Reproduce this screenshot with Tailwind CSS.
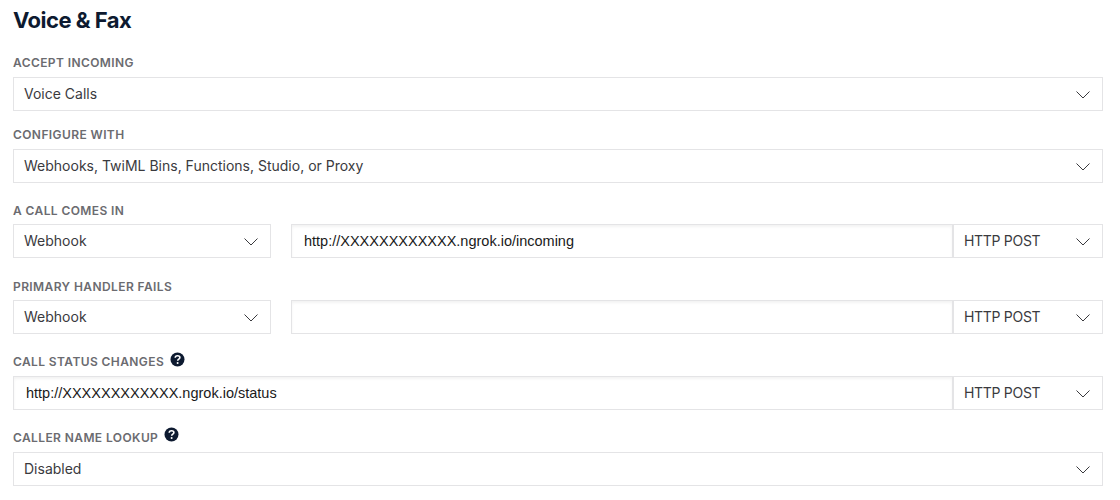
<!DOCTYPE html>
<html lang="en">
<head>
  <meta charset="UTF-8">
  <title>Voice &amp; Fax</title>
  <script src="https://cdn.jsdelivr.net/npm/@tailwindcss/browser@4"></script>
</head>
<body class="bg-white w-[1120px] h-[500px] overflow-hidden font-['Inter',sans-serif]">
<div class="pl-[13px] w-[1103px]">
  <h2 class="pt-[8px] h-[55px] text-[22px] leading-[25px] font-bold tracking-[-0.5px] text-[#0d1a30]">Voice &amp; Fax</h2>

  <label class="block h-[22px] text-[12px] leading-[15px] font-semibold tracking-[0.4px] text-[#6b6b70]">ACCEPT INCOMING</label>
  <div class="flex items-center justify-between h-[34px] px-[10px] border border-[#e4e4e6] text-[14px] text-[#3a3a3e]">
    <span class="-mt-[2px]">Voice Calls</span>
    <svg class="w-[14px] h-[8px] mr-[2px] mt-[2px]" viewBox="0 0 14 8" fill="none" stroke="#3a3a3e" stroke-width="1"><path d="M0.5 0.5 7 7 13.5 0.5"/></svg>
  </div>

  <label class="block mt-[16px] h-[22px] text-[12px] leading-[15px] font-semibold tracking-[0.4px] text-[#6b6b70]">CONFIGURE WITH</label>
  <div class="flex items-center justify-between h-[34px] px-[10px] border border-[#e4e4e6] text-[14px] text-[#3a3a3e]">
    <span class="-mt-[2px]">Webhooks, TwiML Bins, Functions, Studio, or Proxy</span>
    <svg class="w-[14px] h-[8px] mr-[2px] mt-[2px]" viewBox="0 0 14 8" fill="none" stroke="#3a3a3e" stroke-width="1"><path d="M0.5 0.5 7 7 13.5 0.5"/></svg>
  </div>

  <label class="block mt-[20px] h-[21px] text-[12px] leading-[15px] font-semibold tracking-[0.4px] text-[#6b6b70]">A CALL COMES IN</label>
  <div class="flex h-[34px] text-[14px] text-[#3a3a3e]">
    <div class="flex items-center justify-between w-[258px] px-[10px] border border-[#e4e4e6]">
      <span class="-mt-[2px]">Webhook</span>
      <svg class="w-[14px] h-[8px] mr-[2px] mt-[2px]" viewBox="0 0 14 8" fill="none" stroke="#3a3a3e" stroke-width="1"><path d="M0.5 0.5 7 7 13.5 0.5"/></svg>
    </div>
    <div class="flex items-center flex-1 ml-[20px] pl-[12px] pt-[2px] border border-[#e4e4e6] shadow-[inset_0_2px_3px_rgba(0,0,0,0.05)] font-['Liberation_Sans',sans-serif] text-[14.5px] text-[#1a1a1a]">http://XXXXXXXXXXXX.ngrok.io/incoming</div>
    <div class="flex items-center justify-between w-[151px] px-[10px] border border-[#e4e4e6] border-l-2 -ml-px">
      <span class="-mt-[2px] tracking-[-0.3px]">HTTP POST</span>
      <svg class="w-[14px] h-[8px] mr-[2px] mt-[2px]" viewBox="0 0 14 8" fill="none" stroke="#3a3a3e" stroke-width="1"><path d="M0.5 0.5 7 7 13.5 0.5"/></svg>
    </div>
  </div>

  <label class="block mt-[20px] h-[22px] pt-px text-[12px] leading-[15px] font-semibold tracking-[0.4px] text-[#6b6b70]">PRIMARY HANDLER FAILS</label>
  <div class="flex h-[34px] text-[14px] text-[#3a3a3e]">
    <div class="flex items-center justify-between w-[258px] px-[10px] border border-[#e4e4e6]">
      <span class="-mt-[2px]">Webhook</span>
      <svg class="w-[14px] h-[8px] mr-[2px] mt-[2px]" viewBox="0 0 14 8" fill="none" stroke="#3a3a3e" stroke-width="1"><path d="M0.5 0.5 7 7 13.5 0.5"/></svg>
    </div>
    <div class="flex-1 ml-[20px] border border-[#e4e4e6] shadow-[inset_0_2px_3px_rgba(0,0,0,0.05)]"></div>
    <div class="flex items-center justify-between w-[151px] px-[10px] border border-[#e4e4e6] border-l-2 -ml-px">
      <span class="-mt-[2px] tracking-[-0.3px]">HTTP POST</span>
      <svg class="w-[14px] h-[8px] mr-[2px] mt-[2px]" viewBox="0 0 14 8" fill="none" stroke="#3a3a3e" stroke-width="1"><path d="M0.5 0.5 7 7 13.5 0.5"/></svg>
    </div>
  </div>

  <label class="flex items-start gap-[6px] mt-[20px] h-[22px] text-[12px] leading-[15px] font-semibold tracking-[0.4px] text-[#6b6b70]">CALL STATUS CHANGES
    <svg class="w-[15px] h-[15px] -mt-[2px]" viewBox="0 0 15 15"><circle cx="7.5" cy="7.5" r="7" fill="#0d1a30"/><path d="M5.2 5.8c0-1.3 1-2.1 2.4-2.1s2.3.8 2.3 1.9c0 1.6-2.2 1.6-2.2 3.1" fill="none" stroke="#fff" stroke-width="1.6"/><circle cx="7.6" cy="11" r="1" fill="#fff"/></svg>
  </label>
  <div class="flex h-[34px] text-[14px] text-[#3a3a3e]">
    <div class="flex items-center flex-1 pl-[12px] pt-[2px] border border-[#e4e4e6] shadow-[inset_0_2px_3px_rgba(0,0,0,0.05)] font-['Liberation_Sans',sans-serif] text-[14.5px] text-[#1a1a1a]">http://XXXXXXXXXXXX.ngrok.io/status</div>
    <div class="flex items-center justify-between w-[151px] px-[10px] border border-[#e4e4e6] border-l-2 -ml-px">
      <span class="-mt-[2px] tracking-[-0.3px]">HTTP POST</span>
      <svg class="w-[14px] h-[8px] mr-[2px] mt-[2px]" viewBox="0 0 14 8" fill="none" stroke="#3a3a3e" stroke-width="1"><path d="M0.5 0.5 7 7 13.5 0.5"/></svg>
    </div>
  </div>

  <label class="flex items-start gap-[6px] mt-[20px] h-[22px] text-[12px] leading-[15px] font-semibold tracking-[0.4px] text-[#6b6b70]">CALLER NAME LOOKUP
    <svg class="w-[15px] h-[15px] -mt-[3px]" viewBox="0 0 15 15"><circle cx="7.5" cy="7.5" r="7" fill="#0d1a30"/><path d="M5.2 5.8c0-1.3 1-2.1 2.4-2.1s2.3.8 2.3 1.9c0 1.6-2.2 1.6-2.2 3.1" fill="none" stroke="#fff" stroke-width="1.6"/><circle cx="7.6" cy="11" r="1" fill="#fff"/></svg>
  </label>
  <div class="flex items-center justify-between h-[34px] px-[10px] border border-[#e4e4e6] text-[14px] text-[#3a3a3e]">
    <span class="-mt-[2px]">Disabled</span>
    <svg class="w-[14px] h-[8px] mr-[2px] mt-[2px]" viewBox="0 0 14 8" fill="none" stroke="#3a3a3e" stroke-width="1"><path d="M0.5 0.5 7 7 13.5 0.5"/></svg>
  </div>
</div>
</body>
</html>
